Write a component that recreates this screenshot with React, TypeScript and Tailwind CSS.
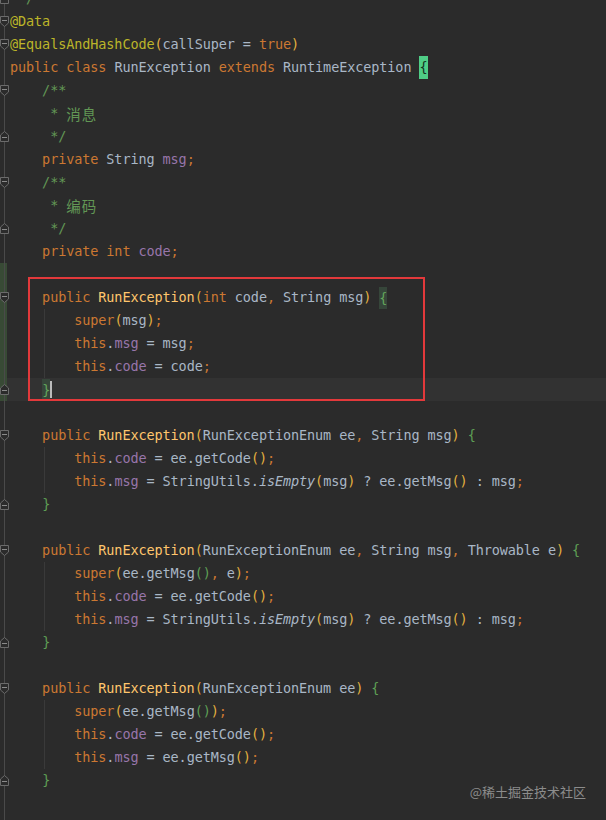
import React from "react";

type Tok = [string, string];

const K = "text-[#cc7832]";
const T = "text-[#a9b7c6]";
const F = "text-[#9876aa]";
const A = "text-[#bbb529]";
const C = "text-[#629755]";
const M = "text-[#ffc66d]";
const Y = "text-[#e2b03f]";
const G = "text-[#5e9f55]";
const I = "text-[#a9b7c6] italic";
const BHL = "BHL";
const DHL = "DHL";

const lines: Tok[][] = [
  [[" */", C]],
  [["@Data", A]],
  [["@EqualsAndHashCode", A], ["(", Y], ["callSuper = ", T], ["true", K], [")", Y]],
  [["public class ", K], ["RunException ", T], ["extends ", K], ["RuntimeException ", T], ["{", BHL]],
  [["    /**", C]],
  [["     * ", C], ["消息", C + " cjk"]],
  [["     */", C]],
  [["    private ", K], ["String ", T], ["msg", F], [";", K]],
  [["    /**", C]],
  [["     * ", C], ["编码", C + " cjk"]],
  [["     */", C]],
  [["    private int ", K], ["code", F], [";", K]],
  [],
  [["    public ", K], ["RunException", M], ["(", Y], ["int ", K], ["code", T], [", ", K], ["String msg", T], [")", Y], [" ", T], ["{", DHL]],
  [["        super", K], ["(", Y], ["msg", T], [")", Y], [";", K]],
  [["        this", K], [".", T], ["msg", F], [" = msg", T], [";", K]],
  [["        this", K], [".", T], ["code", F], [" = code", T], [";", K]],
  [["    ", T], ["}", DHL]],
  [],
  [["    public ", K], ["RunException", M], ["(", Y], ["RunExceptionEnum ee", T], [", ", K], ["String msg", T], [")", Y], [" ", T], ["{", G]],
  [["        this", K], [".", T], ["code", F], [" = ee.getCode", T], ["()", Y], [";", K]],
  [["        this", K], [".", T], ["msg", F], [" = StringUtils.", T], ["isEmpty", I], ["(", Y], ["msg", T], [")", Y], [" ? ee.getMsg", T], ["()", Y], [" : msg", T], [";", K]],
  [["    ", T], ["}", G]],
  [],
  [["    public ", K], ["RunException", M], ["(", Y], ["RunExceptionEnum ee", T], [", ", K], ["String msg", T], [", ", K], ["Throwable e", T], [")", Y], [" ", T], ["{", G]],
  [["        super", K], ["(", Y], ["ee.getMsg", T], ["()", G], [", ", K], ["e", T], [")", Y], [";", K]],
  [["        this", K], [".", T], ["code", F], [" = ee.getCode", T], ["()", Y], [";", K]],
  [["        this", K], [".", T], ["msg", F], [" = StringUtils.", T], ["isEmpty", I], ["(", Y], ["msg", T], [")", Y], [" ? ee.getMsg", T], ["()", Y], [" : msg", T], [";", K]],
  [["    ", T], ["}", G]],
  [],
  [["    public ", K], ["RunException", M], ["(", Y], ["RunExceptionEnum ee", T], [")", Y], [" ", T], ["{", G]],
  [["        super", K], ["(", Y], ["ee.getMsg", T], ["()", G], [")", Y], [";", K]],
  [["        this", K], [".", T], ["code", F], [" = ee.getCode", T], ["()", Y], [";", K]],
  [["        this", K], [".", T], ["msg", F], [" = ee.getMsg", T], ["()", Y], [";", K]],
  [["    ", T], ["}", G]],
  [],
  [],
];

const markers: Record<number, "start" | "end"> = {
  0: "end",
  1: "start",
  2: "start",
  4: "start",
  6: "end",
  8: "start",
  10: "end",
  13: "start",
  17: "end",
  19: "start",
  22: "end",
  24: "start",
  28: "end",
  30: "start",
  34: "end",
};

const guides = new Set([14, 15, 16, 20, 21, 25, 26, 27, 31, 32, 33]);
const vcs = new Set([12, 13, 14, 15, 16, 17]);
const currentLine = 17;

function Marker({ kind }: { kind: "start" | "end" }) {
  return (
    <svg width="9" height="11" viewBox="0 0 9 11" className="absolute left-[0px] top-[6px]">
      {kind === "start" ? (
        <path d="M0.5 0.5 H8.5 V7 L4.5 10.5 L0.5 7 Z" fill="#2b2b2b" stroke="#6b6b6b" strokeWidth="1" />
      ) : (
        <path d="M0.5 10.5 H8.5 V4 L4.5 0.5 L0.5 4 Z" fill="#2b2b2b" stroke="#6b6b6b" strokeWidth="1" />
      )}
      <path d={kind === "start" ? "M2 4.5 H7" : "M2 6.5 H7"} stroke="#8a8a8a" strokeWidth="1" />
    </svg>
  );
}

function Token({ t }: { t: Tok }) {
  const [text, cls] = t;
  if (cls === BHL) {
    return <span className="inline-block h-[23px] leading-[23px] bg-[#4fcd86] text-[#14321f]">{text}</span>;
  }
  if (cls === DHL) {
    return <span className="inline-block h-[22px] leading-[22px] bg-[#36463a] text-[#63a55c]">{text}</span>;
  }
  if (cls.endsWith(" cjk")) {
    return (
      <span className={cls.replace(" cjk", "") + " text-[14.5px] tracking-[1px]"} style={{ fontFamily: '"Noto Sans CJK SC", sans-serif' }}>
        {text}
      </span>
    );
  }
  return <span className={cls}>{text}</span>;
}

export default function App() {
  return (
    <div className="relative w-[606px] h-[820px] overflow-hidden bg-[#2b2b2b]">
      <div
        className="flex flex-col -mt-[13px] text-[13.5px]"
        style={{ fontFamily: '"DejaVu Sans Mono", "Liberation Mono", monospace' }}
      >
        {lines.map((toks, i) => (
          <div
            key={i}
            className={
              "relative flex h-[23px] items-center " + (i === currentLine ? "bg-[#323232]" : "")
            }
          >
            <div className="relative w-[10px] h-full shrink-0">
              {vcs.has(i) && <div className="absolute left-0 top-0 h-full w-[7px] bg-[#384a35]" />}
              <div className="absolute left-[4px] top-0 h-full w-px bg-[#4a4a4a]" />
              {markers[i] && <Marker kind={markers[i]} />}
            </div>
            {guides.has(i) && <div className="absolute left-[44px] top-0 h-full w-px bg-[#3a3a3a]" />}
            <div className="relative whitespace-pre leading-[23px] h-[23px] flex items-center tracking-[-0.1px]">
              {toks.map((t, j) => (
                <Token key={j} t={t} />
              ))}
              {i === currentLine && <span className="inline-block w-[2px] h-[17px] bg-[#bbbbbb]" />}
            </div>
          </div>
        ))}
      </div>

      <div className="absolute left-[28px] top-[277px] w-[397px] h-[124px] border-2 border-[#e3393b]" />

      <div
        className="absolute right-[20px] bottom-[19px] text-[13px] text-[#8c8c8c]"
        style={{ fontFamily: '"Noto Sans CJK SC", "Noto Sans", sans-serif' }}
      >
        @稀土掘金技术社区
      </div>
    </div>
  );
}
